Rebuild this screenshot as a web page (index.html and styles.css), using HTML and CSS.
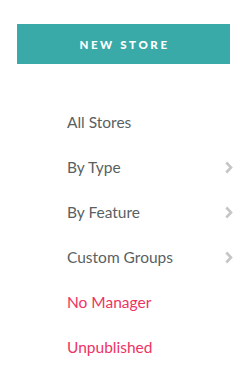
FILE: index.html
```html
<!DOCTYPE html>
<html>
<head>
<meta charset="utf-8">
<link rel="stylesheet" href="styles.css">
</head>
<body>
<div class="sidebar">
  <button class="new-store">NEW STORE</button>
  <ul class="menu">
    <li class="item"><span>All Stores</span></li>
    <li class="item"><span>By Type</span><svg class="chev" width="8" height="13" viewBox="0 0 8 13"><path d="M1.3 1.5 L6 6.5 L1.3 11.5" fill="none" stroke="#c6c6c6" stroke-width="2.6"/></svg></li>
    <li class="item"><span>By Feature</span><svg class="chev" width="8" height="13" viewBox="0 0 8 13"><path d="M1.3 1.5 L6 6.5 L1.3 11.5" fill="none" stroke="#c6c6c6" stroke-width="2.6"/></svg></li>
    <li class="item"><span>Custom Groups</span><svg class="chev" width="8" height="13" viewBox="0 0 8 13"><path d="M1.3 1.5 L6 6.5 L1.3 11.5" fill="none" stroke="#c6c6c6" stroke-width="2.6"/></svg></li>
    <li class="item alert"><span>No Manager</span></li>
    <li class="item alert"><span>Unpublished</span></li>
  </ul>
</div>
</body>
</html>
```
FILE: styles.css
```css
html, body {
  margin: 0;
  padding: 0;
  background: #fff;
}
.sidebar {
  width: 251px;
  padding-top: 24px;
  font-family: "Lato", "Liberation Sans", sans-serif;
}
.new-store {
  display: block;
  margin-left: 17px;
  width: 213px;
  height: 40px;
  border: 0;
  background: #39aaa8;
  color: #fff;
  font-family: "Lato", "Liberation Sans", sans-serif;
  font-weight: 900;
  font-size: 11.5px;
  letter-spacing: 2.6px;
  padding: 0 0 0 2px;
}
.menu {
  list-style: none;
  margin: 0;
  padding: 35px 0 0 67px;
}
.item {
  display: flex;
  align-items: center;
  justify-content: space-between;
  height: 45px;
  padding-right: 18px;
  font-size: 15.5px;
  color: #5a5f63;
}
.item span {
  padding-top: 1px;
}
.item.alert {
  color: #ee3363;
}
.chev {
  display: block;
  margin-top: 2px;
}
```
